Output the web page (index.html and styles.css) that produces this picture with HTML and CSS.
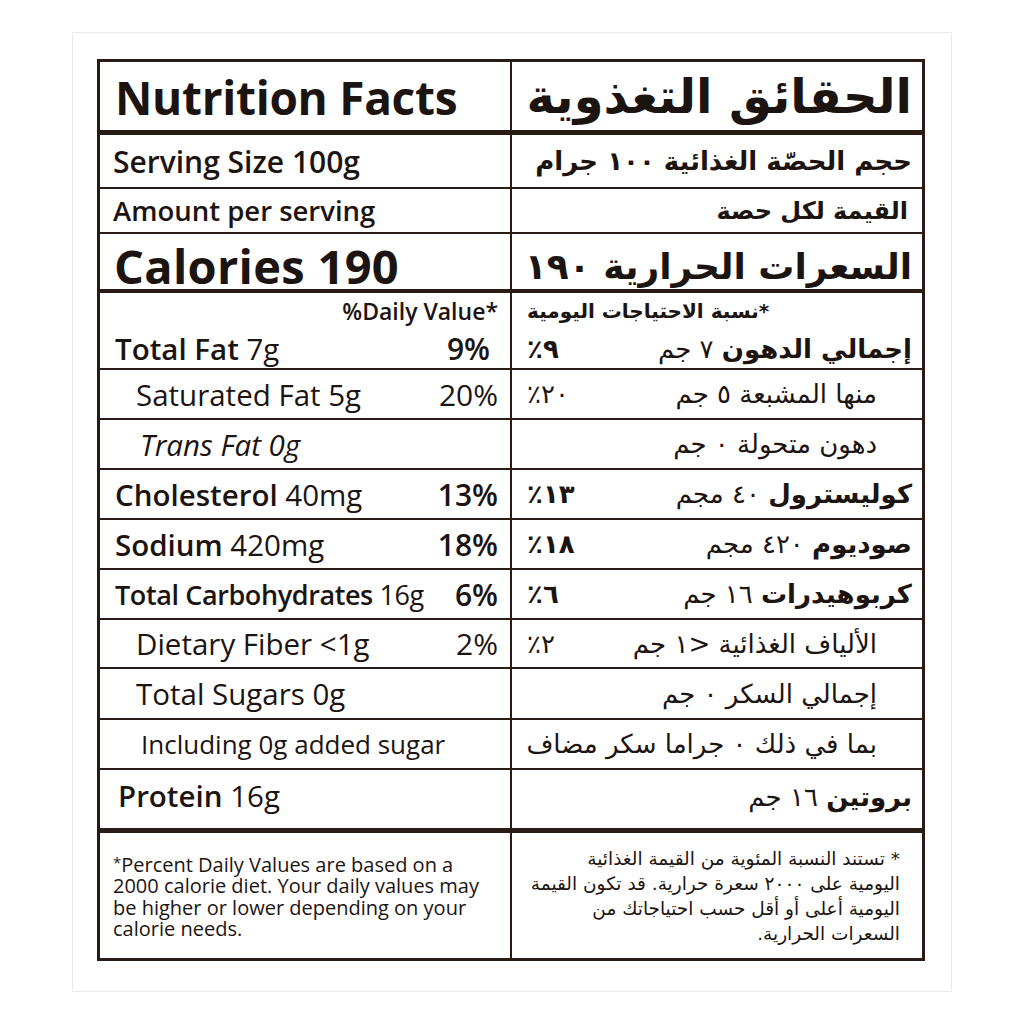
FILE: index.html
```html
<!DOCTYPE html>
<html lang="en">
<head>
<meta charset="utf-8">
<title>Nutrition Facts</title>
<link rel="stylesheet" href="styles.css">
</head>
<body>
<div class="card">
  <div class="label">
    <div class="row r-head">
      <div class="cell en"><span class="title">Nutrition Facts</span></div>
      <div class="cell ar" dir="rtl"><span class="title-ar">الحقائق التغذوية</span></div>
    </div>
    <div class="row r-serving">
      <div class="cell en"><span class="serving">Serving Size 100g</span></div>
      <div class="cell ar" dir="rtl"><span class="serving-ar">حجم الحصّة الغذائية ١٠٠ جرام</span></div>
    </div>
    <div class="row r-amount">
      <div class="cell en"><span class="amount">Amount per serving</span></div>
      <div class="cell ar" dir="rtl"><span class="amount-ar">القيمة لكل حصة</span></div>
    </div>
    <div class="row r-cal">
      <div class="cell en"><span class="calories">Calories 190</span></div>
      <div class="cell ar" dir="rtl"><span class="calories-ar">السعرات الحرارية ١٩٠</span></div>
    </div>
    <div class="row r-dv">
      <div class="cell en stack">
        <div class="dv-line"><span class="dv">%Daily Value*</span></div>
        <div class="nut-line"><span class="nut"><b>Total Fat</b> 7g</span><span class="pct bold pct-narrow">9%</span></div>
      </div>
      <div class="cell ar stack" dir="rtl">
        <div class="dv-line dv-ar-line"><span class="dv-ar">*نسبة الاحتياجات اليومية</span></div>
        <div class="nut-line"><span class="nut-ar"><b>إجمالي الدهون</b> ٧ جم</span><span class="pct-ar bold" dir="ltr">٪٩</span></div>
      </div>
    </div>
    <div class="row r-std">
      <div class="cell en sub"><span class="nut">Saturated Fat 5g</span><span class="pct">20%</span></div>
      <div class="cell ar sub-ar" dir="rtl"><span class="nut-ar">منها المشبعة ٥ جم</span><span class="pct-ar" dir="ltr">٪٢٠</span></div>
    </div>
    <div class="row r-std">
      <div class="cell en sub"><span class="nut trans">Trans Fat 0g</span></div>
      <div class="cell ar sub-ar" dir="rtl"><span class="nut-ar">دهون متحولة ٠ جم</span></div>
    </div>
    <div class="row r-std">
      <div class="cell en"><span class="nut"><b>Cholesterol</b> 40mg</span><span class="pct bold">13%</span></div>
      <div class="cell ar" dir="rtl"><span class="nut-ar"><b>كوليسترول</b> ٤٠ مجم</span><span class="pct-ar bold" dir="ltr">٪١٣</span></div>
    </div>
    <div class="row r-std">
      <div class="cell en"><span class="nut"><b>Sodium</b> 420mg</span><span class="pct bold">18%</span></div>
      <div class="cell ar" dir="rtl"><span class="nut-ar"><b>صوديوم</b> ٤٢٠ مجم</span><span class="pct-ar bold" dir="ltr">٪١٨</span></div>
    </div>
    <div class="row r-std">
      <div class="cell en"><span class="nut carbs"><b>Total Carbohydrates</b> 16g</span><span class="pct bold">6%</span></div>
      <div class="cell ar" dir="rtl"><span class="nut-ar"><b>كربوهيدرات</b> ١٦ جم</span><span class="pct-ar bold" dir="ltr">٪٦</span></div>
    </div>
    <div class="row r-fiber">
      <div class="cell en sub"><span class="nut">Dietary Fiber &lt;1g</span><span class="pct">2%</span></div>
      <div class="cell ar sub-ar" dir="rtl"><span class="nut-ar">الألياف الغذائية &lt;١ جم</span><span class="pct-ar" dir="ltr">٪٢</span></div>
    </div>
    <div class="row r-sugar">
      <div class="cell en sub"><span class="nut">Total Sugars 0g</span></div>
      <div class="cell ar sub-ar" dir="rtl"><span class="nut-ar">إجمالي السكر ٠ جم</span></div>
    </div>
    <div class="row r-std">
      <div class="cell en sub2"><span class="nut small">Including 0g added sugar</span></div>
      <div class="cell ar sub-ar" dir="rtl"><span class="nut-ar">بما في ذلك ٠ جراما سكر مضاف</span></div>
    </div>
    <div class="row r-protein">
      <div class="cell en prot"><span class="nut"><b>Protein</b> 16g</span></div>
      <div class="cell ar prot-ar" dir="rtl"><span class="nut-ar"><b>بروتين</b> ١٦ جم</span></div>
    </div>
    <div class="row r-foot">
      <div class="cell en"><p class="foot"><span class="star">*</span>Percent Daily Values are based on a<br>2000 calorie diet. Your daily values may<br>be higher or lower depending on your<br>calorie needs.</p></div>
      <div class="cell ar foot-ar-cell" dir="rtl"><p class="foot-ar">* تستند النسبة المئوية من القيمة الغذائية<br>اليومية على ٢٠٠٠ سعرة حرارية. قد تكون القيمة<br>اليومية أعلى أو أقل حسب احتياجاتك من<br>السعرات الحرارية.</p></div>
    </div>
  </div>
</div>
</body>
</html>
```
FILE: styles.css
```css
* {
  box-sizing: border-box;
  margin: 0;
  padding: 0;
}

html, body {
  background: #ffffff;
}

body {
  padding: 32px 72px;
  font-family: "Open Sans", "DejaVu Sans", sans-serif;
  color: #1c1411;
}

.card {
  width: 880px;
  height: 960px;
  border: 1px solid #ebebeb;
  padding: 26px 0 0 24px;
}

.label {
  width: 828px;
  border: 3px solid #2a1b16;
}

.row {
  display: grid;
  grid-template-columns: 412px 410px;
  border-bottom: 2px solid #2a1b16;
}

.cell {
  display: flex;
  align-items: center;
  justify-content: space-between;
  white-space: nowrap;
}

.en {
  border-right: 2px solid #2a1b16;
  padding: 0 12px 0 15px;
}

.ar {
  direction: rtl;
  font-family: "DejaVu Sans", sans-serif;
  padding: 0 10px 0 15px;
}

.r-head { height: 73px; border-bottom-width: 5px; }
.r-serving { height: 54px; }
.r-amount { height: 45px; }
.r-cal { height: 59px; border-bottom-width: 4px; }
.r-dv { height: 77px; }
.r-std { height: 50px; }
.r-fiber { height: 49px; }
.r-sugar { height: 51px; }
.r-protein { height: 63px; border-bottom-width: 5px; }
.r-foot { height: 125px; border-bottom: none; }

/* English texts */
.title {
  font-weight: 700;
  font-size: 46px;
  letter-spacing: -0.3px;
  padding-top: 2px;
}

.serving {
  font-weight: 600;
  font-size: 30px;
  margin-left: -2px;
}

.amount {
  font-weight: 600;
  font-size: 27.5px;
  margin-left: -2px;
}

.calories {
  font-weight: 700;
  font-size: 47px;
  margin-left: -1px;
  letter-spacing: 0.3px;
}

.stack {
  flex-direction: column;
  align-items: stretch;
  justify-content: flex-start;
}

.dv-line {
  height: 36px;
  display: flex;
  align-items: center;
  justify-content: flex-end;
}

.dv-ar-line {
  justify-content: flex-end;
}

.nut-line {
  height: 39px;
  display: flex;
  align-items: center;
  justify-content: space-between;
}

.dv {
  font-weight: 600;
  font-size: 23px;
}

.nut {
  font-size: 29.5px;
  font-weight: 400;
}

.nut b {
  font-weight: 600;
}

.nut.carbs {
  font-size: 27px;
  letter-spacing: -0.4px;
}

.pct {
  font-size: 30px;
}

.bold {
  font-weight: 600;
}

.pct-narrow {
  margin-right: 8px;
}

.sub {
  padding-left: 36px;
}

.sub2 {
  padding-left: 41px;
}

.prot {
  padding-left: 18px;
  padding-bottom: 8px;
}

.prot-ar {
  padding-bottom: 5px;
}

.trans {
  font-style: italic;
  padding-left: 4px;
}

.nut.small {
  font-size: 26px;
}

.foot {
  font-size: 20px;
  line-height: 21.5px;
  white-space: nowrap;
  margin-left: -2px;
}

.star {
  vertical-align: 4px;
  font-size: 15px;
}

/* Arabic texts */
.title-ar {
  font-weight: 700;
  font-size: 48px;
}

.serving-ar {
  font-weight: 700;
  font-size: 26px;
}

.amount-ar {
  font-weight: 700;
  font-size: 24px;
  margin-right: 4px;
}

.calories-ar {
  font-weight: 700;
  font-size: 36px;
}

.dv-ar {
  font-weight: 700;
  font-size: 20px;
}

.nut-ar {
  font-size: 26px;
}

.nut-ar b {
  font-weight: 700;
}

.pct-ar {
  font-size: 26px;
  direction: ltr;
  unicode-bidi: isolate;
}

.sub-ar {
  padding-right: 45px;
}

.foot-ar-cell {
  padding-right: 22px;
}

.foot-ar {
  font-size: 18.5px;
  line-height: 25px;
  text-align: right;
}
```
